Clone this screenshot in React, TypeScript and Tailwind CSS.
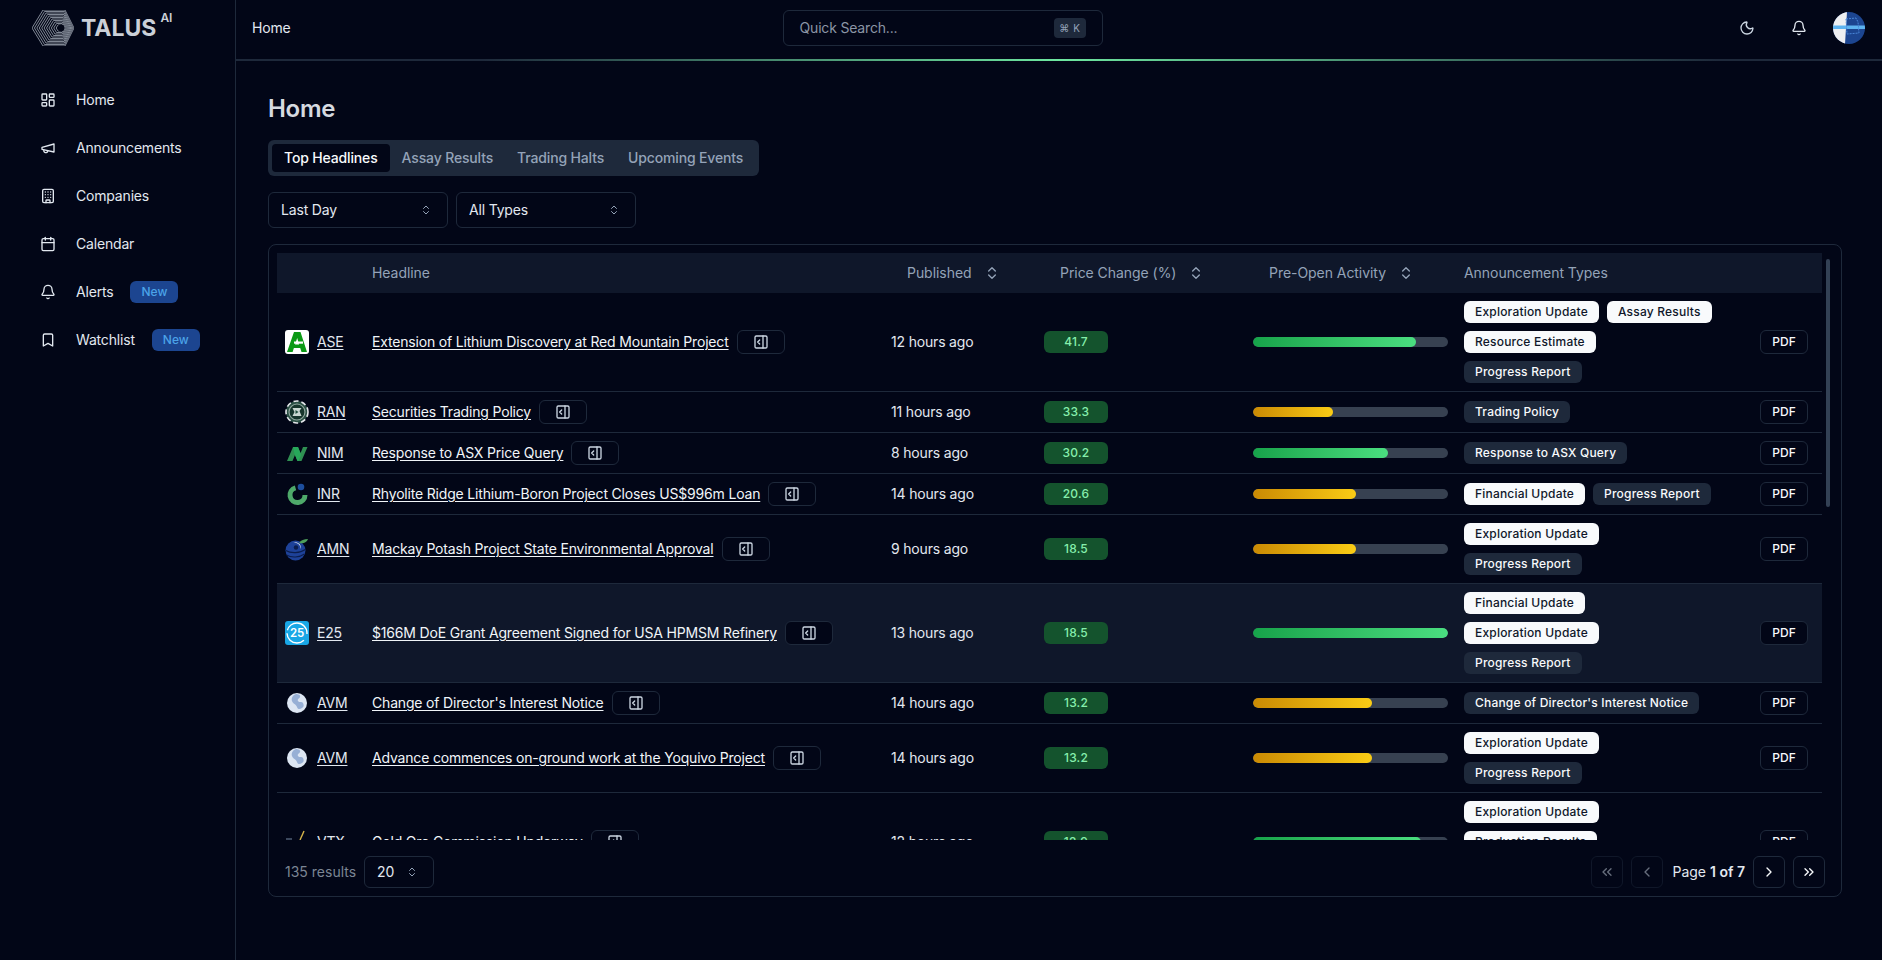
import {
  Bell,
  Bookmark,
  Building,
  Calendar,
  ChevronLeft,
  ChevronRight,
  ChevronsLeft,
  ChevronsRight,
  ChevronsUpDown,
  LayoutDashboard,
  Moon,
  PanelRightOpen,
} from "lucide-react";
import type { ReactNode } from "react";

type Row = {
  logo: ReactNode;
  ticker: string;
  headline: string;
  published: string;
  price: string;
  activity: number;
  tone: "green" | "yellow";
  chips: [string, boolean][];
  active?: boolean;
};

function MegaphoneIcon({ className }: { className?: string }) {
  return (
    <svg className={className} viewBox="0 0 24 24" fill="none" stroke="currentColor" strokeWidth="2" strokeLinecap="round" strokeLinejoin="round">
      <path d="m3 11 18-5v12L3 14v-3z" />
      <path d="M11.6 16.8a3 3 0 1 1-5.8-1.6" />
    </svg>
  );
}

function TalusLogo() {
  // hexagon rings shrink toward the hole, so the lines pack tight on the right
  const verts = [[0, 18], [11, 0], [33, 0], [42, 18], [33, 36], [11, 36]];
  const hole = [29, 18];
  const rings = [];
  for (let i = 0; i < 12; i++) {
    const s = 1 - i / 12;
    const points = verts
      .map(([x, y]) => `${hole[0] + s * (x - hole[0])},${hole[1] + s * (y - hole[1])}`)
      .join(" ");
    rings.push(<polygon key={i} points={points} fill="none" stroke="#8f96a3" strokeWidth="0.9" />);
  }
  return (
    <svg width="42" height="36" viewBox="0 0 42 36">
      {rings}
      <circle cx="29" cy="18" r="3.4" fill="#020617" />
    </svg>
  );
}

function AseLogo() {
  return (
    <svg width="24" height="24" viewBox="0 0 24 24">
      <rect width="24" height="24" rx="3" fill="#fff" />
      <path d="M9 2h6.500L22 22h-5.500l-1.300-4H8.700l1-3.500h4.400L12.200 8 7.600 22H2z" fill="#0c9a16" />
      <rect x="9" y="11.500" width="9" height="2.200" fill="#fff" />
    </svg>
  );
}

function RanLogo() {
  return (
    <svg width="24" height="24" viewBox="0 0 24 24">
      <circle cx="12" cy="12" r="11" fill="#2a4f44" />
      <circle cx="12" cy="12" r="11" fill="none" stroke="#e5e7eb" strokeWidth="1.6" strokeDasharray="5 3" />
      <circle cx="12" cy="12" r="8" fill="#16352c" stroke="#8fa69d" strokeWidth="1.2" />
      <path d="M7.500 8h9l-2 3 2 5h-9l2-4z" fill="#c9d6d1" />
      <path d="M10.500 10l3 2-3 2z" fill="#1f4d3d" />
    </svg>
  );
}

function NimLogo() {
  return (
    <svg width="24" height="24" viewBox="0 0 24 24">
      <path d="M2 20L8 6h5l2.600 6L18 6h4.500l-6 14h-4L10 14l-2.500 6z" fill="#2f8f52" />
      <path d="M8 6h5l3 8-2.500 6h-1l-3-7z" fill="#27a85a" />
    </svg>
  );
}

function InrLogo() {
  return (
    <svg width="24" height="24" viewBox="0 0 24 24">
      <path d="M10.500 5.800A7.500 7.500 0 1 0 20 13" fill="none" stroke="#4ea96a" strokeWidth="5" />
      <circle cx="16" cy="5" r="3.300" fill="#1d4e9e" />
    </svg>
  );
}

function AmnLogo() {
  return (
    <svg width="24" height="24" viewBox="0 0 24 24">
      <circle cx="10.500" cy="13.500" r="10" fill="#1e4299" />
      <path d="M1.500 18c5 3 13 2.500 18-1M.8 13.500c5 3 14 3 19.500-1" fill="none" stroke="#0b1d4d" strokeWidth="1.1" />
      <path d="M8 5.500a6 6 0 0 1 8 6.500 7 7 0 0 0-8-6.500z" fill="#e2e8f0" />
      <circle cx="11" cy="10.500" r="2.200" fill="#0b1d4d" />
      <path d="M14 6c2-3 5-4 9-4-1 3-4 5-9 4z" fill="#4e9f5b" />
    </svg>
  );
}

function E25Logo() {
  return (
    <svg width="24" height="24" viewBox="0 0 24 24">
      <rect width="24" height="24" rx="3" fill="#19a7e6" />
      <circle cx="12" cy="12" r="10" fill="none" stroke="#fff" strokeWidth="1.4" strokeDasharray="23 3 30 7" strokeDashoffset="-8" />
      <text x="12" y="16" textAnchor="middle" fontSize="11.5" fontWeight="600" fill="#fff" fontFamily="Inter, sans-serif">25</text>
    </svg>
  );
}

function AvmLogo() {
  return (
    <svg width="24" height="24" viewBox="0 0 24 24">
      <defs>
        <filter id="avm-blur">
          <feGaussianBlur stdDeviation="0.7" />
        </filter>
      </defs>
      <g filter="url(#avm-blur)">
        <circle cx="12" cy="12" r="10" fill="#dde6f3" />
        <path d="M11 3c-3 1-5 4-4 7s4 3 5 6 3 2 5 1 2-3 1-5-4 0-5-2 1-2 2-4-2-3-4-3z" fill="#7f9ccb" opacity="0.75" />
      </g>
    </svg>
  );
}

function VtxLogo() {
  return (
    <svg width="24" height="24" viewBox="0 0 24 24">
      <path d="M1 9h6" stroke="#64748b" strokeWidth="1.2" />
      <path d="M19 1l-4 9" stroke="#d6b44a" strokeWidth="1.4" />
    </svg>
  );
}

const rows: Row[] = [
  {
    logo: <AseLogo />,
    ticker: "ASE",
    headline: "Extension of Lithium Discovery at Red Mountain Project",
    published: "12 hours ago",
    price: "41.7",
    activity: 83.6,
    tone: "green",
    chips: [["Exploration Update", true], ["Assay Results", true], ["Resource Estimate", true], ["Progress Report", false]],
  },
  {
    logo: <RanLogo />,
    ticker: "RAN",
    headline: "Securities Trading Policy",
    published: "11 hours ago",
    price: "33.3",
    activity: 41,
    tone: "yellow",
    chips: [["Trading Policy", false]],
  },
  {
    logo: <NimLogo />,
    ticker: "NIM",
    headline: "Response to ASX Price Query",
    published: "8 hours ago",
    price: "30.2",
    activity: 69,
    tone: "green",
    chips: [["Response to ASX Query", false]],
  },
  {
    logo: <InrLogo />,
    ticker: "INR",
    headline: "Rhyolite Ridge Lithium-Boron Project Closes US$996m Loan",
    published: "14 hours ago",
    price: "20.6",
    activity: 52.7,
    tone: "yellow",
    chips: [["Financial Update", true], ["Progress Report", false]],
  },
  {
    logo: <AmnLogo />,
    ticker: "AMN",
    headline: "Mackay Potash Project State Environmental Approval",
    published: "9 hours ago",
    price: "18.5",
    activity: 52.7,
    tone: "yellow",
    chips: [["Exploration Update", true], ["Progress Report", false]],
  },
  {
    logo: <E25Logo />,
    ticker: "E25",
    headline: "$166M DoE Grant Agreement Signed for USA HPMSM Refinery",
    published: "13 hours ago",
    price: "18.5",
    activity: 100,
    tone: "green",
    chips: [["Financial Update", true], ["Exploration Update", true], ["Progress Report", false]],
    active: true,
  },
  {
    logo: <AvmLogo />,
    ticker: "AVM",
    headline: "Change of Director's Interest Notice",
    published: "14 hours ago",
    price: "13.2",
    activity: 61,
    tone: "yellow",
    chips: [["Change of Director's Interest Notice", false]],
  },
  {
    logo: <AvmLogo />,
    ticker: "AVM",
    headline: "Advance commences on-ground work at the Yoquivo Project",
    published: "14 hours ago",
    price: "13.2",
    activity: 61,
    tone: "yellow",
    chips: [["Exploration Update", true], ["Progress Report", false]],
  },
  {
    logo: <VtxLogo />,
    ticker: "VTX",
    headline: "Gold Ore Commission Underway",
    published: "12 hours ago",
    price: "12.9",
    activity: 86.3,
    tone: "green",
    chips: [["Exploration Update", true], ["Production Results", true], ["Progress Report", false]],
  },
];

const navItems = [
  { label: "Home", icon: LayoutDashboard },
  { label: "Announcements", icon: MegaphoneIcon },
  { label: "Companies", icon: Building },
  { label: "Calendar", icon: Calendar },
  { label: "Alerts", icon: Bell, badge: true },
  { label: "Watchlist", icon: Bookmark, badge: true },
];

function Chip({ label, light }: { label: string; light: boolean }) {
  return (
    <span
      className={
        light
          ? "inline-flex h-[22px] items-center rounded-md bg-[#f8fafc] px-[11px] text-xs font-medium tracking-[0.2px] text-[#0f172a]"
          : "inline-flex h-[22px] items-center rounded-md bg-[#1e293b] px-[11px] text-xs font-medium tracking-[0.2px] text-[#f8fafc]"
      }
    >
      {label}
    </span>
  );
}

function SortHead({ label, className }: { label: string; className: string }) {
  return (
    <th className={className}>
      <span className="inline-flex items-center gap-3 text-sm font-normal tracking-[-0.05px] text-[#94a3b8]">
        {label}
        <ChevronsUpDown className="h-4 w-4" />
      </span>
    </th>
  );
}

export default function App() {
  return (
    <div className="flex h-[960px] w-[1882px] overflow-hidden bg-[#020617] font-['Inter',sans-serif] text-sm tracking-[-0.18px] text-[#f8fafc]">
      {/* Sidebar */}
      <aside className="flex w-[236px] shrink-0 flex-col border-r border-[#1e293b]">
        <div className="flex h-[56px] items-start pl-8 pt-[10px]">
          <TalusLogo />
          <span className="ml-[7px] text-[23px] leading-[37px] font-bold tracking-normal text-[#cbd0d8]">TALUS</span>
          <span className="ml-[4px] text-xs font-semibold tracking-normal text-[#cbd0d8]">AI</span>
        </div>
        <nav className="mt-5 flex flex-col">
          {navItems.map((item) => (
            <div key={item.label} className="flex h-12 items-center pl-10 text-[#e2e8f0]">
              <item.icon className="h-4 w-4" />
              <span className="ml-5">{item.label}</span>
              {item.badge && (
                <span className="ml-[17px] inline-flex h-[22px] w-12 items-center justify-center rounded-md bg-[#1c4590] text-xs font-medium tracking-normal text-[#4ba3e8]">
                  New
                </span>
              )}
            </div>
          ))}
        </nav>
      </aside>

      <div className="flex min-w-0 flex-1 flex-col">
        {/* Top bar */}
        <header className="flex h-[59px] shrink-0 items-center pb-[3px] pl-4 pr-[17px]">
          <span className="text-[#e2e8f0]">Home</span>
          <div className="ml-[492px] flex h-9 w-[320px] items-center justify-between rounded-md border border-[#1e293b] pl-4 pr-4">
            <span className="text-[#8b95a5]">Quick Search...</span>
            <kbd className="inline-flex h-5 w-8 items-center justify-center gap-1 rounded bg-[#1e293b] font-['Inter',sans-serif] text-[10px] text-[#94a3b8]">
              <span>⌘</span>
              <span>K</span>
            </kbd>
          </div>
          <div className="ml-auto flex items-center">
            <Moon className="h-4 w-4 text-[#cbd5e1]" />
            <Bell className="ml-9 h-4 w-4 text-[#e2e8f0]" />
            <svg className="ml-[26px]" width="32" height="32" viewBox="0 0 32 32">
              <clipPath id="avatar">
                <circle cx="16" cy="16" r="16" />
              </clipPath>
              <g clipPath="url(#avatar)">
                <rect width="32" height="32" fill="#1c4590" />
                <path d="M14 0L12 32H0V0z" fill="#eeeff1" />
                <rect y="13.500" width="32" height="3.500" fill="#5db3f0" />
                <path d="M13 7l10-1 2 4 1 11-12 1z" fill="none" stroke="#4a86d8" strokeWidth="1" strokeDasharray="2 1" />
              </g>
            </svg>
          </div>
        </header>
        <div className="h-[2px] shrink-0 bg-[linear-gradient(to_right,#1e293b_0%,#1e293b_15%,#6ee7a0_50%,#1e293b_90%,#1e293b_100%)]" />

        {/* Main */}
        <main className="flex min-h-0 flex-1 flex-col pl-8 pr-10 pt-8">
          <h1 className="text-2xl font-semibold tracking-[-0.3px] text-[#d6dae0]">Home</h1>

          <div className="mt-[15px] inline-flex h-9 w-fit items-center rounded-md bg-[#1e293b] p-1 font-medium tracking-[-0.15px]">
            <span className="flex h-7 items-center rounded bg-[#020617] px-3 text-[#f8fafc]">Top Headlines</span>
            <span className="flex h-7 items-center px-3 text-[#94a3b8]">Assay Results</span>
            <span className="flex h-7 items-center px-3 text-[#94a3b8]">Trading Halts</span>
            <span className="flex h-7 items-center px-3 text-[#94a3b8]">Upcoming Events</span>
          </div>

          <div className="mt-4 flex gap-2">
            {["Last Day", "All Types"].map((label) => (
              <div
                key={label}
                className="flex h-9 w-[180px] items-center justify-between rounded-md border border-[#1e293b] pl-3 pr-[15px]"
              >
                <span className="text-[#e2e8f0]">{label}</span>
                <ChevronsUpDown className="h-3 w-3 text-[#94a3b8]" />
              </div>
            ))}
          </div>

          {/* Table card */}
          <section className="mt-4 flex h-[653px] w-[1574px] flex-col rounded-lg border border-[#1e293b] p-2 pb-0">
            <div className="relative h-[587px] shrink-0 overflow-hidden">
              <table className="w-[1545px] table-fixed border-collapse">
                <colgroup>
                  <col className="w-[87px]" />
                  <col className="w-[519px]" />
                  <col className="w-[153px]" />
                  <col className="w-[209px]" />
                  <col className="w-[211px]" />
                  <col className="w-[296px]" />
                  <col className="w-[70px]" />
                </colgroup>
                <thead>
                  <tr className="h-10 bg-[#0f172a]">
                    <th />
                    <th className="px-2 text-left text-sm font-normal tracking-[-0.05px] text-[#94a3b8]">Headline</th>
                    <SortHead label="Published" className="pl-6 text-left" />
                    <SortHead label="Price Change (%)" className="pl-6 text-left" />
                    <SortHead label="Pre-Open Activity" className="pl-6 text-left" />
                    <th className="px-2 text-left text-sm font-normal tracking-[-0.05px] text-[#94a3b8]">Announcement Types</th>
                    <th />
                  </tr>
                </thead>
                <tbody>
                  {rows.map((row, i) => (
                    <tr key={i} className={row.active ? "border-b border-[#1e293b] bg-[#0f172a]" : "border-b border-[#1e293b]"}>
                      <td className="p-2">
                        <div className="flex items-center gap-2">
                          {row.logo}
                          <span className="text-[#e2e8f0] underline underline-offset-2">{row.ticker}</span>
                        </div>
                      </td>
                      <td className="p-2">
                        <div className="flex items-center gap-2">
                          <span className="whitespace-nowrap text-[#f1f5f9] underline underline-offset-2">{row.headline}</span>
                          <span className="flex h-6 w-12 shrink-0 items-center justify-center rounded-md border border-[#1e293b] bg-[#020617]">
                            <PanelRightOpen className="h-4 w-4 text-[#cbd5e1]" />
                          </span>
                        </div>
                      </td>
                      <td className="p-2 text-[#e2e8f0]">{row.published}</td>
                      <td className="p-2">
                        <span className="flex h-[22px] w-16 items-center justify-center rounded-md bg-[#14532d] text-xs font-medium tracking-[0.2px] text-[#86efac]">
                          {row.price}
                        </span>
                      </td>
                      <td className="p-2">
                        <div className="h-2.5 w-full overflow-hidden rounded-full bg-[#374151]">
                          <div
                            className={
                              row.tone === "green"
                                ? "h-full rounded-full bg-gradient-to-r from-[#16a34a] to-[#4ade80]"
                                : "h-full rounded-full bg-gradient-to-r from-[#ca8a04] to-[#facc15]"
                            }
                            style={{ width: `${row.activity}%` }}
                          />
                        </div>
                      </td>
                      <td className="p-2">
                        <div className="flex w-[250px] flex-wrap gap-2">
                          {row.chips.map(([label, light]) => (
                            <Chip key={label} label={label} light={light} />
                          ))}
                        </div>
                      </td>
                      <td className="p-2">
                        <span className="flex h-6 w-12 items-center justify-center rounded-md border border-[#1e293b] bg-[#020617] text-xs font-medium tracking-normal text-[#f8fafc]">
                          PDF
                        </span>
                      </td>
                    </tr>
                  ))}
                </tbody>
              </table>
              {/* scrollbar thumb */}
              <div className="absolute right-[3px] top-[6px] h-[248px] w-1 rounded-full bg-[#334155]" />
            </div>

            <div className="mt-4 flex items-center px-2">
              <span className="tracking-normal text-[#7b8594]">135 results</span>
              <div className="ml-2 flex h-8 w-[70px] items-center justify-between rounded-md border border-[#1e293b] pl-3 pr-[15px]">
                <span className="text-[#e2e8f0]">20</span>
                <ChevronsUpDown className="h-3 w-3 text-[#94a3b8]" />
              </div>
              <div className="ml-auto flex items-center">
                <span className="flex h-8 w-8 items-center justify-center rounded-md border border-[#1e293b] opacity-50">
                  <ChevronsLeft className="h-4 w-4 text-[#cbd5e1]" />
                </span>
                <span className="ml-2 flex h-8 w-8 items-center justify-center rounded-md border border-[#1e293b] opacity-50">
                  <ChevronLeft className="h-4 w-4 text-[#cbd5e1]" />
                </span>
                <span className="ml-[9px] tracking-normal text-[#e2e8f0]">
                  Page <span className="font-semibold">1 of 7</span>
                </span>
                <span className="ml-2 flex h-8 w-8 items-center justify-center rounded-md border border-[#1e293b]">
                  <ChevronRight className="h-4 w-4 text-[#f8fafc]" />
                </span>
                <span className="ml-2 flex h-8 w-8 items-center justify-center rounded-md border border-[#1e293b]">
                  <ChevronsRight className="h-4 w-4 text-[#f8fafc]" />
                </span>
              </div>
            </div>
          </section>
        </main>
      </div>
    </div>
  );
}
